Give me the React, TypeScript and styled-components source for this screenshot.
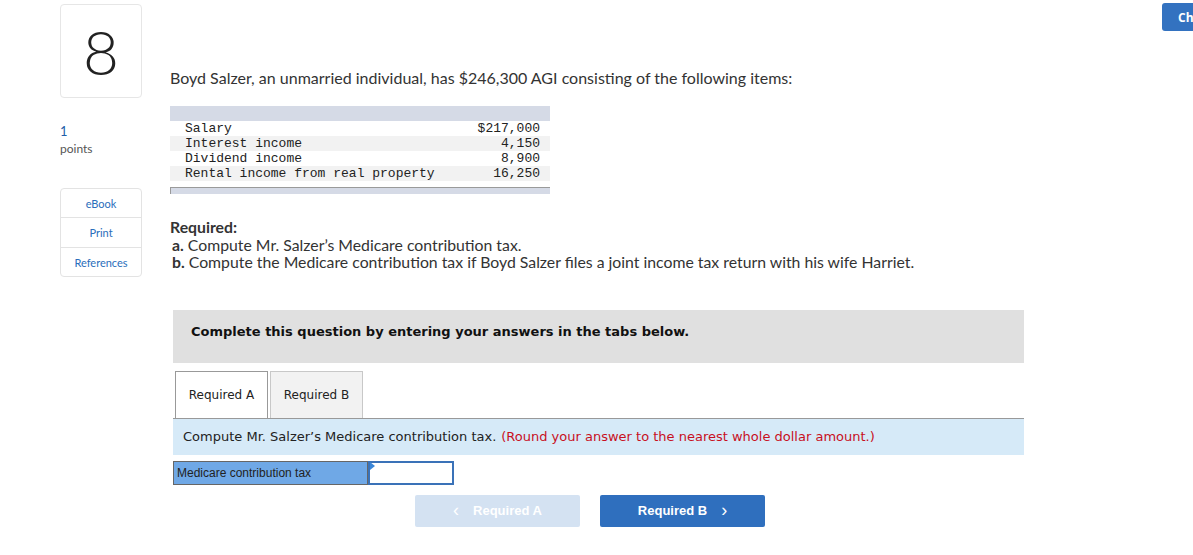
import React from "react";
import styled, { createGlobalStyle } from "styled-components";

const Global = createGlobalStyle`
  html, body { margin: 0; padding: 0; background: #fff; }
  body { overflow: hidden; }
`;

const Page = styled.div`
  display: flex;
  width: 1193px;
  height: 555px;
  overflow: hidden;
  font-family: Lato, "Open Sans", sans-serif;
  color: #333;
`;

const LeftRail = styled.aside`
  flex-shrink: 0;
  margin-left: 60px;
  width: 82px;
  padding-top: 4px;
  display: flex;
  flex-direction: column;
`;

const NumberCard = styled.div`
  box-sizing: border-box;
  height: 94px;
  border: 1px solid #e6e6e6;
  border-radius: 4px;
  display: flex;
  align-items: center;
  justify-content: center;
  font-family: Lato, sans-serif;
  font-weight: 300;
  font-size: 62px;
  color: #222;
  line-height: 1;
`;

const Points = styled.div`
  margin-top: 25px;
  font-size: 12px;
  line-height: 17px;
  color: #555;
  & > b { display: block; font-weight: 400; color: #1f5ea8; font-size: 13px; }
`;

const LinkBox = styled.div`
  margin-top: 31px;
  border: 1px solid #e3e3e3;
  border-radius: 4px;
  display: flex;
  flex-direction: column;
`;

const LinkItem = styled.a<{ $h: number }>`
  height: ${(p) => p.$h}px;
  display: flex;
  align-items: center;
  justify-content: center;
  font-size: 11px;
  color: #2a6ebb;
  text-decoration: none;
  & + & { border-top: 1px solid #e3e3e3; }
`;

const Main = styled.main`
  flex-shrink: 0;
  margin-left: 28px;
  width: 854px;
  display: flex;
  flex-direction: column;
`;

const Intro = styled.p`
  margin: 69px 0 0;
  font-size: 16px;
  line-height: 18px;
  color: #333;
`;

const DataTable = styled.div`
  margin-top: 19px;
  width: 380px;
  display: flex;
  flex-direction: column;
  font-family: "Liberation Mono", monospace;
  font-size: 13px;
  color: #222;
`;

const TableHead = styled.div`
  height: 15px;
  background: #d5dae6;
`;

const TableRow = styled.div<{ $alt?: boolean }>`
  height: 15px;
  line-height: 15px;
  display: flex;
  justify-content: space-between;
  padding: 0 10px 0 15px;
  background: ${(p) => (p.$alt ? "#f2f2f2" : "#fff")};
`;

const TableFoot = styled.div`
  margin-top: 6px;
  height: 6px;
  background: #d5dae6;
  border-top: 1px solid #9a9a9a;
  border-left: 1px solid #9a9a9a;
`;

const Required = styled.div`
  margin-top: 24px;
  font-size: 15.8px;
  line-height: 17.5px;
  color: #333;
  & > div { padding-left: 2px; }
  & b { font-weight: 700; }
`;

const Workspace = styled.section`
  margin-left: 3px;
  margin-top: 39px;
  display: flex;
  flex-direction: column;
  font-family: "DejaVu Sans", Verdana, sans-serif;
`;

const Instructions = styled.div`
  height: 53px;
  box-sizing: border-box;
  background: #e0e0e0;
  padding: 14px 0 0 18px;
  font-size: 13px;
  line-height: 16px;
  font-weight: 700;
  color: #111;
`;

const TabBar = styled.div`
  margin-top: 8px;
  display: flex;
  gap: 2px;
  padding-left: 2px;
  border-bottom: 1px solid #999;
`;

const Tab = styled.div<{ $active?: boolean }>`
  box-sizing: border-box;
  width: 93px;
  height: 47px;
  display: flex;
  align-items: center;
  justify-content: center;
  font-size: 12px;
  color: #222;
  border: 1px solid ${(p) => (p.$active ? "#999" : "#c8c8c8")};
  border-bottom: none;
  background: ${(p) => (p.$active ? "#fff" : "#f2f2f2")};
`;

const Prompt = styled.div`
  height: 36px;
  background: #d6eaf8;
  display: flex;
  align-items: center;
  padding-left: 10px;
  font-size: 13px;
  color: #222;
  white-space: nowrap;
  & > span { color: #c8101e; margin-left: 5px; }
`;

const AnswerRow = styled.div`
  margin-top: 6px;
  display: flex;
  height: 24px;
`;

const AnswerLabel = styled.div`
  box-sizing: border-box;
  width: 195px;
  background: #6fa8e6;
  border: 1px solid #666;
  font-family: "Liberation Sans", Arial, sans-serif;
  font-size: 12px;
  color: #222;
  padding-left: 3px;
  display: flex;
  align-items: center;
`;

const AnswerInput = styled.div`
  position: relative;
  box-sizing: border-box;
  width: 86px;
  background: #fff;
  border: 2px solid #3a72b8;
  &::before {
    content: "";
    position: absolute;
    left: 0;
    top: 0;
    border-top: 4px solid transparent;
    border-bottom: 4px solid transparent;
    border-left: 5px solid #3a86d8;
    transform: translateY(-1px);
  }
`;

const NavRow = styled.div`
  margin-top: 10px;
  display: flex;
  gap: 20px;
  padding-left: 242px;
`;

const NavButton = styled.button<{ $disabled?: boolean }>`
  width: 165px;
  height: 32px;
  border: none;
  border-radius: 2px;
  background: ${(p) => (p.$disabled ? "#d4e2f2" : "#2f6fbe")};
  color: #fff;
  font-family: "Liberation Sans", Arial, sans-serif;
  font-weight: 700;
  font-size: 13px;
  display: flex;
  align-items: center;
  justify-content: center;
  gap: 14px;
  padding: 0;
  cursor: pointer;
  & > i { font-style: normal; font-weight: 400; font-size: 18px; line-height: 1; margin-top: -2px; }
`;

const RightRail = styled.div`
  flex-shrink: 0;
  padding-left: 138px;
  padding-top: 3px;
`;

const CheckButton = styled.button`
  width: 120px;
  height: 28px;
  border: none;
  border-radius: 3px;
  background: #3372c0;
  color: #fff;
  font-family: "Open Sans", Arial, sans-serif;
  font-weight: 700;
  font-size: 12px;
  text-align: left;
  white-space: nowrap;
  padding-left: 16px;
`;

const rows: [string, string][] = [
  ["Salary", "$217,000"],
  ["Interest income", "4,150"],
  ["Dividend income", "8,900"],
  ["Rental income from real property", "16,250"],
];

export default function App() {
  return (
    <>
      <Global />
      <Page>
        <LeftRail>
          <NumberCard>8</NumberCard>
          <Points>
            <b>1</b>points
          </Points>
          <LinkBox>
            <LinkItem $h={28}>eBook</LinkItem>
            <LinkItem $h={29}>Print</LinkItem>
            <LinkItem $h={28}>References</LinkItem>
          </LinkBox>
        </LeftRail>
        <Main>
          <Intro>
            Boyd Salzer, an unmarried individual, has $246,300 AGI consisting of the following items:
          </Intro>
          <DataTable>
            <TableHead />
            {rows.map(([k, v], i) => (
              <TableRow key={k} $alt={i % 2 === 1}>
                <span>{k}</span>
                <span>{v}</span>
              </TableRow>
            ))}
            <TableFoot />
          </DataTable>
          <Required>
            <b>Required:</b>
            <div>
              <b>a.</b> Compute Mr. Salzer’s Medicare contribution tax.
            </div>
            <div>
              <b>b.</b> Compute the Medicare contribution tax if Boyd Salzer files a joint income tax return with his wife Harriet.
            </div>
          </Required>
          <Workspace>
            <Instructions>Complete this question by entering your answers in the tabs below.</Instructions>
            <TabBar>
              <Tab $active>Required A</Tab>
              <Tab>Required B</Tab>
            </TabBar>
            <Prompt>
              Compute Mr. Salzer’s Medicare contribution tax.
              <span>(Round your answer to the nearest whole dollar amount.)</span>
            </Prompt>
            <AnswerRow>
              <AnswerLabel>Medicare contribution tax</AnswerLabel>
              <AnswerInput />
            </AnswerRow>
            <NavRow>
              <NavButton $disabled>
                <i>‹</i>Required A
              </NavButton>
              <NavButton>
                Required B<i>›</i>
              </NavButton>
            </NavRow>
          </Workspace>
        </Main>
        <RightRail>
          <CheckButton>Check my work</CheckButton>
        </RightRail>
      </Page>
    </>
  );
}
